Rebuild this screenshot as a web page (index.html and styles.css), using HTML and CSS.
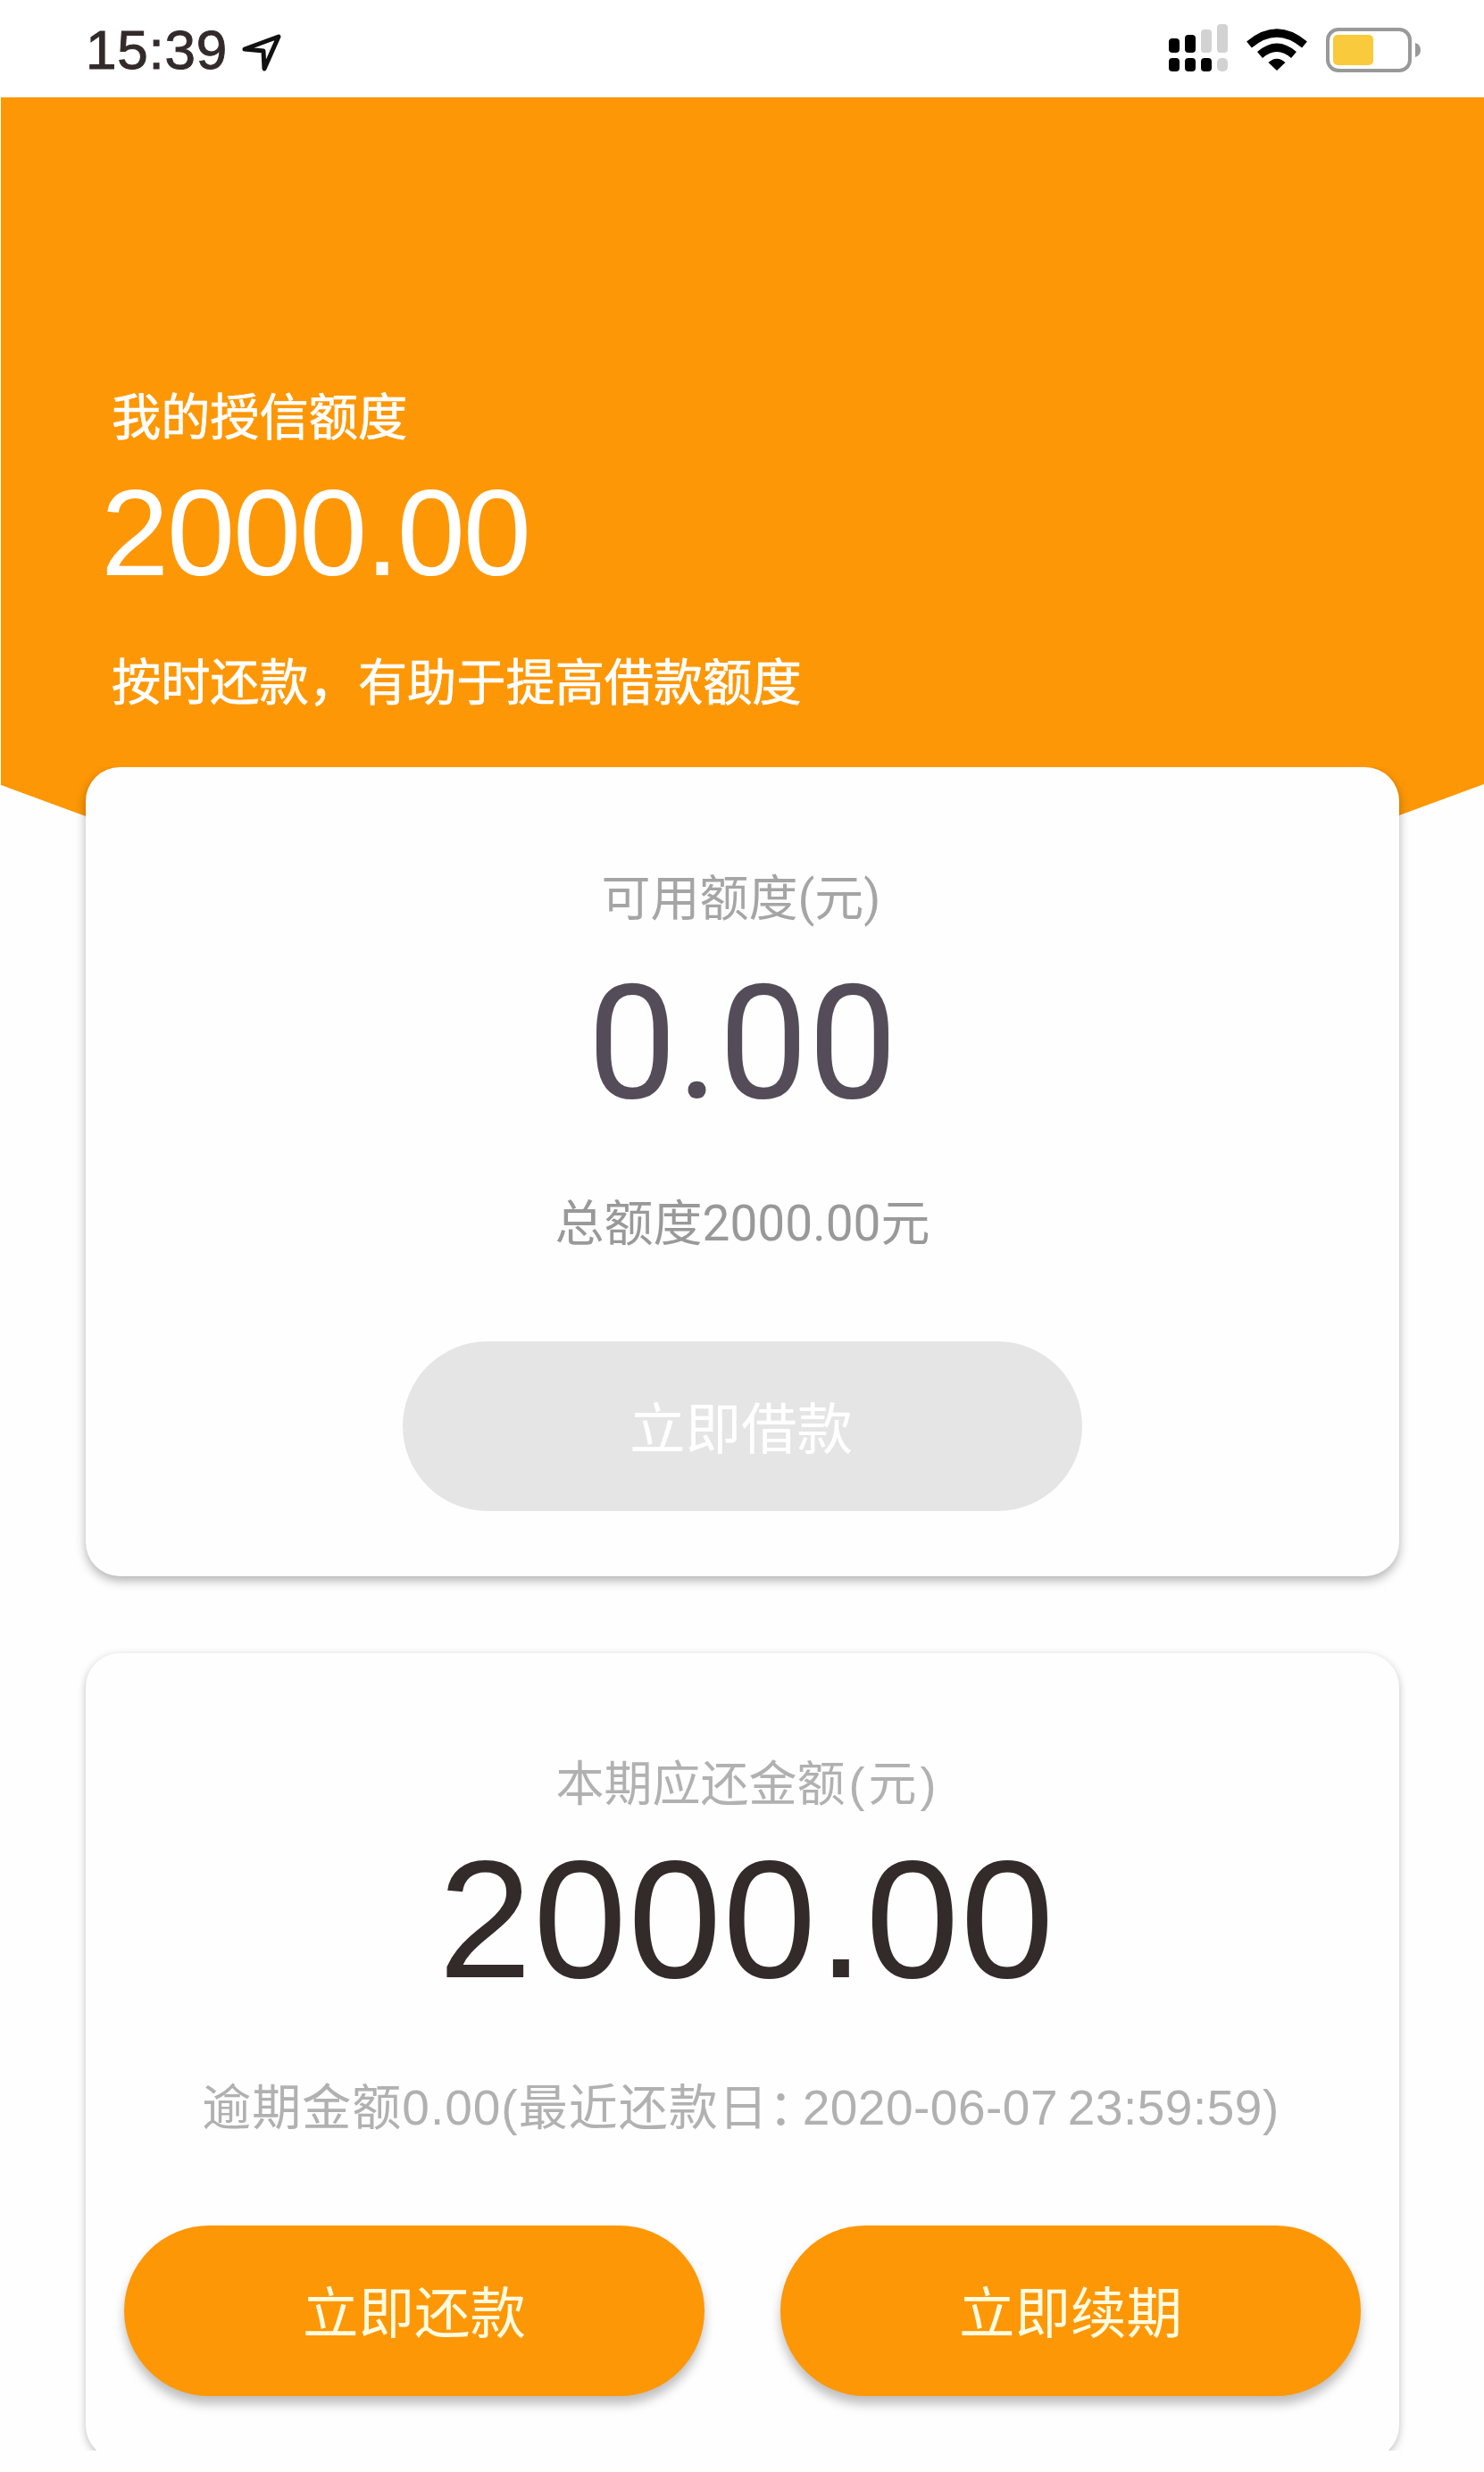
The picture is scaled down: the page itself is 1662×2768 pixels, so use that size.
FILE: index.html
```
<!DOCTYPE html>
<html lang="zh-CN">

<head>
    <meta charset="UTF-8">
    <meta name="viewport" content="width=device-width, initial-scale=1.0">
    <title>我的额度</title>
    <link rel="stylesheet" href="styles.css">
</head>

<body>

    <header class="status">
        <span class="time">15:39</span>
        <svg class="arrow" width="50" height="46" viewBox="0 0 50 46">
            <path d="M5 20 L43 6 L27 42 L26 22 Z" fill="none" stroke="#111" stroke-width="5" stroke-linejoin="round"/>
        </svg>
        <svg class="signal" width="66" height="54" viewBox="0 0 66 54">
            <g fill="#000">
                <rect x="0" y="16" width="12" height="16" rx="4"/>
                <rect x="18" y="12" width="12" height="20" rx="4"/>
                <rect x="0" y="38" width="12" height="15" rx="4"/>
                <rect x="18" y="38" width="12" height="15" rx="4"/>
                <rect x="36" y="38" width="12" height="15" rx="4"/>
            </g>
            <g fill="#d2d2d2">
                <rect x="36" y="6" width="12" height="26" rx="4"/>
                <rect x="54" y="0" width="12" height="32" rx="4"/>
                <rect x="54" y="38" width="12" height="15" rx="5"/>
            </g>
        </svg>
        <svg class="wifi" width="68" height="50" viewBox="0 0 68 50">
            <path d="M3 19 Q34 -7 65 19" fill="none" stroke="#000" stroke-width="9"/>
            <path d="M15 30.500 Q34 14 53 30.500" fill="none" stroke="#000" stroke-width="9"/>
            <path d="M24.500 39 Q34 30.500 43.500 39 L34 48 Z" fill="#000"/>
        </svg>
        <svg class="battery" width="108" height="50" viewBox="0 0 108 50">
            <rect x="2" y="2" width="92" height="46" rx="12" fill="#fff" stroke="#999" stroke-width="4"/>
            <rect x="8" y="8" width="45" height="34" rx="5" fill="#f8ca3c"/>
            <path d="M100 17 Q106 19 106 25 Q106 31 100 33 Z" fill="#999"/>
        </svg>
    </header>

    <section class="hero">
        <p class="hero-label">我的授信额度</p>
        <p class="hero-amount">2000.00</p>
        <p class="hero-tip">按时还款，有助于提高借款额度</p>
    </section>

    <main>
        <section class="card available">
            <p class="label">可用额度(元)</p>
            <p class="amount">0.00</p>
            <p class="total">总额度2000.00元</p>
            <button class="borrow" type="button" disabled>立即借款</button>
        </section>

        <section class="card repay">
            <p class="label">本期应还金额<span class="unit">(元)</span></p>
            <p class="amount">2000.00</p>
            <p class="overdue">逾期金额0.00(最近还款日：<span class="date">2020-06-07 23:59:59)</span></p>
            <div class="actions">
                <button type="button">立即还款</button>
                <button type="button">立即续期</button>
            </div>
        </section>
    </main>

</body>

</html>
```

FILE: styles.css
```
* {
    box-sizing: border-box;
}

body {
    margin: 0;
    width: 1662px;
    height: 2768px;
    overflow: hidden;
    background-color: #fefefe;
    font-family: "Liberation Sans", "Noto Sans CJK SC", sans-serif;
}

p {
    margin: 0;
    line-height: 70px;
    font-size: 55px;
    white-space: nowrap;
}

.status {
    display: flex;
    align-items: flex-start;
    height: 109px;
    padding-left: 96px;
    background-color: #fff;
}

.time {
    width: 173px;
    margin-top: 20px;
    font-size: 62px;
    line-height: 72px;
    letter-spacing: 0.8px;
    color: #332b2a;
    -webkit-text-stroke: 1px #332b2a;
}

.arrow {
    margin-top: 35px;
}

.signal {
    margin-top: 27px;
    margin-left: 990px;
}

.wifi {
    margin-top: 31px;
    margin-left: 21px;
}

.battery {
    margin-top: 31px;
    margin-left: 21px;
}

.hero {
    height: 850px;
    margin-left: 1px;
    padding: 324px 0 0 124px;
    color: #fff;
    background-color: #fd9705;
    clip-path: polygon(0 0, 100% 0, 100% 769px, 1566px 804px, 830px 850px, 95px 805px, 0 770px);
}

.hero-label,
.hero-tip {
    font-size: 55.2px;
    -webkit-text-stroke: 0.7px #fff;
}

.hero-amount {
    margin: 19px 0 58px -12px;
    font-size: 137px;
    line-height: 150px;
    letter-spacing: -2.2px;
}

main {
    height: 1885px;
    margin-top: -100px;
    padding: 0 95px 0 96px;
    overflow: hidden;
    position: relative;
}

.card {
    padding-top: 112px;
    border-radius: 38px;
    background-color: #fefefe;
    box-shadow: 0 5px 12px rgba(0, 0, 0, 0.3);
    text-align: center;
}

.available {
    height: 906px;
    font-family: Roboto, "Noto Sans CJK SC", sans-serif;
}

.label {
    color: #a5a5a5;
}

.available .label {
    margin-left: -3px;
}

.available .amount {
    margin: 37px 0 77px;
    font-size: 178px;
    line-height: 180px;
    color: #544d59;
}

.total {
    color: #999;
}

button {
    width: 650px;
    height: 191px;
    padding: 0 0 4px;
    border: none;
    border-radius: 96px;
    background-color: #fd9705;
    box-shadow: 0 9px 12px rgba(0, 0, 0, 0.25);
    color: #fffbe0;
    font-family: "Liberation Sans", "Noto Sans CJK SC", sans-serif;
    font-size: 62.5px;
}

.borrow {
    display: block;
    width: 761px;
    height: 190px;
    margin: 97px auto 0;
    padding-right: 3px;
    background-color: #e5e5e5;
    box-shadow: none;
    color: #fff;
}

.repay {
    height: 903px;
    margin-top: 86px;
    box-shadow: 0 3px 10px rgba(0, 0, 0, 0.25);
}

.repay .label {
    padding-left: 12px;
    font-size: 54px;
    color: #b0b1b0;
}

.unit {
    margin-left: 4px;
    letter-spacing: 4px;
}

.repay .amount {
    margin: 26px 0 86px;
    padding-left: 10px;
    font-size: 188px;
    line-height: 180px;
    letter-spacing: 1.6px;
    color: #332b2a;
}

.overdue {
    margin-left: -4px;
    letter-spacing: 1px;
    color: #b0b1b0;
}

.date {
    margin-left: -18px;
    letter-spacing: 0.5px;
    word-spacing: -5px;
}

.actions {
    display: flex;
    justify-content: space-between;
    margin-top: 97px;
    padding: 0 43px;
}
```
